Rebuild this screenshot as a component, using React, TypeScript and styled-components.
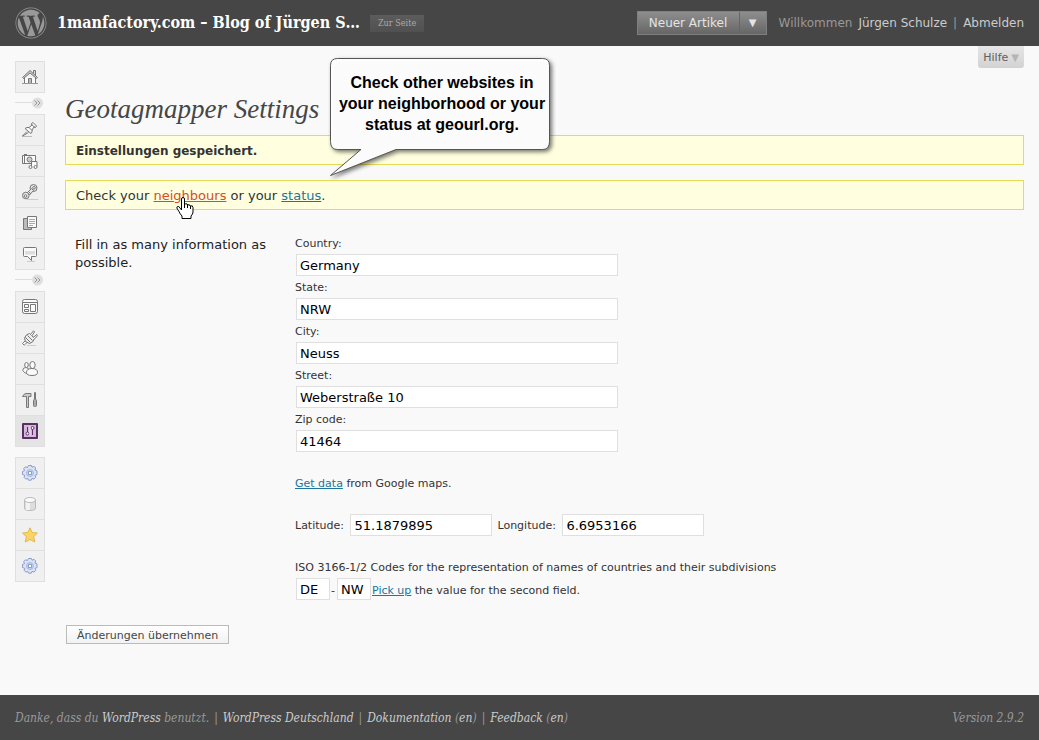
import React from "react";
import styled, { createGlobalStyle } from "styled-components";
import { FaWordpress } from "react-icons/fa";

const sans = `"DejaVu Sans", Verdana, sans-serif`;
const serif = `"DejaVu Serif Condensed", "DejaVu Serif", Georgia, serif`;

const GlobalStyle = createGlobalStyle`
  * { box-sizing: border-box; }
  body {
    margin: 0;
    background: #f9f9f9;
    color: #333;
    font: 13px/18px ${sans};
  }
`;

const Page = styled.div`
  display: flex;
  flex-direction: column;
  min-height: 100vh;
`;

const Header = styled.header`
  display: flex;
  align-items: center;
  height: 46px;
  padding: 0 15px;
  background: #464646;
  white-space: nowrap;
`;

const Logo = styled(FaWordpress)`
  width: 32px;
  height: 32px;
  color: #999;
`;

const SiteTitle = styled.h1`
  margin: 0 10px;
  color: #fff;
  font: bold 16px/24px ${serif};
`;

const VisitLink = styled.a`
  padding: 0 8px;
  background: linear-gradient(#5c5c5c, #505050);
  color: #aaa;
  font: 9px/17px ${serif};
  text-decoration: none;
`;

const HeaderRight = styled.div`
  display: flex;
  align-items: center;
  gap: 12px;
  margin-left: auto;
`;

const SplitButton = styled.div`
  display: flex;
  height: 24px;
  border: 1px solid #808080;
  background: linear-gradient(#8e8e8e, #666);
`;

const SplitPart = styled.button<{ $caret?: boolean }>`
  width: ${(p) => (p.$caret ? "27px" : "101px")};
  padding: 0;
  border: 0;
  border-left: ${(p) => (p.$caret ? "1px solid #666" : "0")};
  background: none;
  color: #e4e4e4;
  font: ${(p) => (p.$caret ? "10px" : "12px")} / 20px ${sans};
`;

const Greeting = styled.span`
  display: flex;
  gap: 6px;
  color: #999;
  font-size: 12px;
  a {
    color: #ccc;
    text-decoration: none;
  }
`;

const Body = styled.div`
  display: flex;
  flex: 1;
  gap: 20px;
  padding: 0 15px;
`;

const Sidebar = styled.nav`
  display: flex;
  flex-direction: column;
  width: 30px;
  padding-top: 15px;
`;

const MenuGroup = styled.div<{ $gap?: boolean }>`
  display: flex;
  flex-direction: column;
  margin-top: ${(p) => (p.$gap ? "10px" : "0")};
  border: 1px solid #e0e0e0;
  background: #f0f0f0;
`;

const MenuItem = styled.a<{ $active?: boolean }>`
  display: flex;
  align-items: center;
  justify-content: center;
  height: 30px;
  background: ${(p) => (p.$active ? "#e4e4e4" : "transparent")};
  & + & {
    height: 31px;
    border-top: 1px solid #e0e0e0;
  }
`;

const Separator = styled.button`
  display: flex;
  align-items: flex-start;
  height: 21px;
  padding: 4px 0 0;
  border: 0;
  background: none;
`;

const Main = styled.main`
  flex: 1;
  min-width: 0;
`;

const HelpRow = styled.div`
  display: flex;
  justify-content: flex-end;
  height: 46px;
`;

const HelpButton = styled.button`
  display: flex;
  gap: 3px;
  height: 22px;
  padding: 0 5px;
  border: 0;
  border-radius: 0 0 3px 3px;
  background: linear-gradient(#e6e6e6, #d2d2d2);
  color: #606060;
  font: 11px/23px ${sans};
  span {
    color: #b5b5b5;
    font-size: 10px;
  }
`;

const PageTitle = styled.h2`
  margin: 0 0 8px;
  color: #464646;
  font: italic 27px/35px "Liberation Serif", Georgia, serif;
`;

const Notice = styled.div`
  position: relative;
  height: 30px;
  margin-bottom: 15px;
  padding: 0 10px;
  border: 1px solid #e6db55;
  background: #ffffe0;
  line-height: 29px;
  strong {
    font-size: 12px;
  }
`;

const Link = styled.a<{ $hot?: boolean }>`
  color: ${(p) => (p.$hot ? "#d54e21" : "#21759b")};
`;

const Callout = styled.aside`
  position: absolute;
  top: -81px;
  left: 262px;
  width: 228px;
  height: 128px;
  color: #000;
  font: bold 16px/21px "Liberation Sans", Arial, sans-serif;
  text-align: center;
  svg {
    position: absolute;
    inset: 0;
  }
  p {
    position: relative;
    width: 225px;
    margin: 0;
    padding: 17px 0 0 3px;
    white-space: nowrap;
  }
`;

const Cursor = styled.svg`
  position: absolute;
  top: 16px;
  left: 110px;
`;

const FormArea = styled.form`
  display: grid;
  grid-template-columns: 200px 1fr;
  column-gap: 20px;
  padding: 7px 0 0 10px;
`;

const Intro = styled.p`
  margin: 4px 0 0;
  color: #222;
`;

const Fields = styled.div`
  font-size: 11px;
  line-height: 22px;
`;

const Field = styled.label`
  display: flex;
  flex-direction: column;
  max-width: 323px;
  span {
    height: 22px;
    line-height: 24px;
  }
`;

const TextInput = styled.input<{ $width?: number }>`
  width: ${(p) => (p.$width ? p.$width + "px" : "auto")};
  height: 22px;
  margin-left: 1px;
  padding: 0 3px;
  border: 1px solid #dfdfdf;
  border-radius: 0;
  background: #fff;
  color: #000;
  font: 13px/20px ${sans};
`;

const Line = styled.div<{ $tight?: boolean }>`
  display: flex;
  gap: ${(p) => (p.$tight ? "1px" : "5px")};
  height: 22px;
  margin-top: ${(p) => (p.$tight ? "0" : "20px")};
  line-height: ${(p) => (p.$tight ? "26px" : "24px")};
  white-space: pre;
  label {
    display: flex;
    gap: 2px;
  }
`;

const SubmitButton = styled.button`
  height: 19px;
  margin: 25px 0 51px 1px;
  padding: 1px 10px 0;
  border: 1px solid #bbb;
  background: linear-gradient(#fff, #f2f2f2);
  color: #464646;
  font: 11px/17px ${sans};
`;

const Footer = styled.footer`
  display: flex;
  justify-content: space-between;
  align-items: center;
  height: 45px;
  padding: 0 15px;
  background: #464646;
  color: #999;
  font: italic 12px/20px ${serif};
  white-space: nowrap;
  a {
    color: #ccc;
    text-decoration: none;
  }
`;

const FooterLinks = styled.span`
  display: flex;
  gap: 5px;
`;

const Glyph = ({ children, stroke = "#777" }: { children: React.ReactNode; stroke?: string }) => (
  <svg width="16" height="16" viewBox="0 0 16 16" fill="#fafafa" stroke={stroke} strokeWidth="1" strokeLinejoin="round" aria-hidden="true">
    {children}
  </svg>
);

const HomeIcon = () => (
  <Glyph>
    <path d="M2.500 8v6.500h11V8" />
    <path d="M11.500 4.500v-3h2v5" fill="#ddd" />
    <path d="M.5 8.500 8 1.500l7.500 7-1 1L8 4 1.500 9.500z" fill="#ccc" />
    <path d="M6.500 14.500v-5h3v5" fill="#bbb" />
    <path d="M0 14.500h16" stroke="#999" />
  </Glyph>
);

const PinIcon = () => (
  <Glyph>
    <path d="M0 14.500h10" stroke="#bbb" />
    <path d="M5 9.500.5 14l6-3.500" />
    <path d="M9.500 1.500 11 .5l3.500 3.500-1 1.500-1.500-.5-2 3q.5 2-1 3.500L3 6.500Q5 5 7 5.500l3-2.500z" />
    <path d="M9.500 2.500 13 5.500M7 5.500l3 3" />
  </Glyph>
);

const MediaIcon = () => (
  <Glyph>
    <path d="M.5 2.500h13v8H.5zM2 1.500h3" />
    <circle cx="7.500" cy="6.500" r="2.500" fill="#ccc" />
    <path d="M2.500 3v7" />
    <path d="M9.500 13.500V8.500h5.500v5" />
    <circle cx="8.500" cy="14" r="1.500" />
    <circle cx="13.500" cy="14" r="1.500" />
  </Glyph>
);

const LinkIcon = () => (
  <Glyph>
    <path d="M5 15.500h11" stroke="#ccc" />
    <g fill="#e6e6e6">
      <circle cx="11.500" cy="4" r="3.500" />
      <circle cx="3.800" cy="11.500" r="3.300" />
      <path d="m5.500 8.500 4-4 2 2-4 4.500z" />
      <path d="m6.500 7.500 2.500 2.500" />
    </g>
    <circle cx="12" cy="3.800" r="1.300" />
    <circle cx="3.500" cy="12" r="1.300" />
  </Glyph>
);

const PagesIcon = () => (
  <Glyph>
    <path d="M1.500 3.500h8v11h-8z" fill="#bbb" />
    <path d="M5.500 1.500h9v11h-9z" />
    <path d="M7 4.500h6M7 6.500h6M7 8.500h6M7 10.500h4" stroke="#aaa" />
  </Glyph>
);

const CommentIcon = () => (
  <Glyph>
    <path d="M5 15.500h8" stroke="#ccc" />
    <path d="M2.500 1.500h11q1 0 1 1v7q0 1-1 1H9.500v4l-4-4h-3q-1 0-1-1v-7q0-1 1-1z" />
    <path d="M3 5h10v3.500H3z" fill="#ddd" stroke="none" />
  </Glyph>
);

const LayoutIcon = () => (
  <Glyph>
    <rect x=".5" y=".5" width="15" height="14" rx="2" />
    <path d="M1 3.500h14" />
    <path d="M2.500 5.500h4v3h-4zM2.500 10.500h4v2h-4zM8.500 5.500h5v7h-5z" />
  </Glyph>
);

const PlugIcon = () => (
  <Glyph>
    <path d="M5 15.500h9" stroke="#ccc" />
    <path d="M3.500 10.500.5 13.500l1.700 1.700 3.300-3.200" />
    <path d="M3.500 11.500 2.500 8Q4 4 7.500 3.500L12.500 8.500q-1 4-5 5z" fill="#eee" />
    <path d="M8.500 4.500 11.500.8l1 1-2.500 4M11 7.500l4-3 .7 1-3.700 4" />
    <path d="m5.500 5.500 5 5M3.500 7.500l5 5" />
  </Glyph>
);

const UsersIcon = () => (
  <Glyph>
    <path d="M.8 9.500q0-3 3-3t3 3-2 3-4-3z" />
    <ellipse cx="4.500" cy="4" rx="1.800" ry="2.500" />
    <ellipse cx="10.500" cy="4" rx="2.700" ry="3.500" />
    <path d="M4.500 11.500q0-4 5.500-4t5.500 4q0 3-5.500 3t-5.500-3z" />
  </Glyph>
);

const ToolsIcon = () => (
  <Glyph>
    <path d="M.5 4.500Q2 1.500 4 1.500h5v3H6.500v11h-2v-11H2.500z" fill="#ccc" />
    <path d="M12.500 7V.500h1V7" />
    <rect x="11.500" y="7.500" width="3" height="7" rx="1" fill="#aaa" />
  </Glyph>
);

const SettingsIcon = () => (
  <Glyph stroke="#5b2f63">
    <rect x="1" y="1" width="14" height="14" fill="#d5b9db" strokeWidth="2" />
    <path d="M5.500 4v6M10.500 6v6" />
    <circle cx="5.500" cy="10.500" r="1.500" fill="#fff" />
    <circle cx="10.500" cy="5" r="1.500" fill="#fff" />
    <path d="M8 3.500v9" stroke="#f3e6f5" />
  </Glyph>
);

const GearIcon = () => (
  <Glyph stroke="#8b9dc9">
    <path d="M6.500.5h3L10 2.300l2-1 1.700 1.700-.8 2 2.100.9v3.700l-2 .8.700 2-1.700 1.700-2-.7-.8 1.800H6.500l-.7-1.800-2 .7-1.700-1.700.8-2L.5 9.500v-3l2-.9-.8-2 1.700-1.800 2.100.7z" fill="#dbe4f6" />
    <circle cx="8" cy="8" r="3.500" fill="#c5d1ed" stroke="#aab9dd" />
    <rect x="6.500" y="6.500" width="3" height="3" fill="#fff" />
  </Glyph>
);

const DatabaseIcon = () => (
  <Glyph stroke="#bbb">
    <path d="M2.500 4v8q0 2.500 5.500 2.500t5.500-2.500V4" fill="#ddd" />
    <path d="M4 6h4v8H4z" fill="#f2f2f2" stroke="none" />
    <ellipse cx="8" cy="4" rx="5.500" ry="2.500" />
  </Glyph>
);

const StarIcon = () => (
  <Glyph stroke="#e3b84c">
    <path d="m8 .8 2.200 4.700 5.200.6-3.800 3.600 1.200 5.300L8 12.500 3.200 15l1.200-5.300L.6 6.100l5.200-.6z" fill="#fbd366" />
  </Glyph>
);

const Divider = ({ label }: { label: string }) => (
  <Separator type="button" aria-label={label}>
    <svg width="28" height="12" viewBox="0 0 28 12" fill="none">
      <path d="M0 5.500h17" stroke="#dfdfdf" />
      <circle cx="22.500" cy="6" r="5.500" fill="#dfdfdf" />
      <path d="m19.500 3.500 2.500 2.500-2.500 2.500M22.500 3.500 25 6l-2.500 2.500" stroke="#999" />
    </svg>
  </Separator>
);

const Menu = ({ items, gap }: { items: [string, React.ComponentType][]; gap?: boolean }) => (
  <MenuGroup $gap={gap}>
    {items.map(([label, Icon], i) => (
      <MenuItem key={i} href="#" aria-label={label} $active={label === "Einstellungen"}>
        <Icon />
      </MenuItem>
    ))}
  </MenuGroup>
);

const addressFields = [
  ["Country:", "Germany"],
  ["State:", "NRW"],
  ["City:", "Neuss"],
  ["Street:", "Weberstraße 10"],
  ["Zip code:", "41464"],
];

export default function App() {
  return (
    <Page>
      <GlobalStyle />
      <Header>
        <Logo />
        <SiteTitle>1manfactory.com – Blog of Jürgen S…</SiteTitle>
        <VisitLink href="#">Zur Seite</VisitLink>
        <HeaderRight>
          <SplitButton>
            <SplitPart type="button">Neuer Artikel</SplitPart>
            <SplitPart type="button" $caret>▼</SplitPart>
          </SplitButton>
          <Greeting>
            <span>Willkommen</span>
            <a href="#">Jürgen Schulze</a>
            <span>|</span>
            <a href="#">Abmelden</a>
          </Greeting>
        </HeaderRight>
      </Header>
      <Body>
        <Sidebar>
          <Menu items={[["Dashboard", HomeIcon]]} />
          <Divider label="Menü einklappen" />
          <Menu
            items={[
              ["Artikel", PinIcon],
              ["Mediathek", MediaIcon],
              ["Links", LinkIcon],
              ["Seiten", PagesIcon],
              ["Kommentare", CommentIcon],
            ]}
          />
          <Divider label="Menü einklappen" />
          <Menu
            items={[
              ["Design", LayoutIcon],
              ["Plugins", PlugIcon],
              ["Benutzer", UsersIcon],
              ["Werkzeuge", ToolsIcon],
              ["Einstellungen", SettingsIcon],
            ]}
          />
          <Menu
            gap
            items={[
              ["Plugin", GearIcon],
              ["Datenbank", DatabaseIcon],
              ["Favoriten", StarIcon],
              ["Plugin", GearIcon],
            ]}
          />
        </Sidebar>
        <Main>
          <HelpRow>
            <HelpButton type="button">
              Hilfe <span>▼</span>
            </HelpButton>
          </HelpRow>
          <PageTitle>Geotagmapper Settings</PageTitle>
          <Notice>
            <strong>Einstellungen gespeichert.</strong>
            <Callout>
              <svg width="228" height="128" viewBox="0 0 228 128">
                <path
                  d="M9.500 3.500h205q7 0 7 7v76q0 8-7 8H68L2.500 120.500 33 94.500H9.500q-7 0-7-8v-76q0-7 7-7z"
                  fill="#fff"
                  fillOpacity=".97"
                  stroke="#555"
                  style={{ filter: "drop-shadow(2px 2px 2px rgba(0,0,0,.55))" }}
                />
              </svg>
              <p>
                Check other websites in
                <br />
                your neighborhood or your
                <br />
                status at geourl.org.
              </p>
            </Callout>
          </Notice>
          <Notice>
            Check your <Link href="#" $hot>neighbours</Link> or your <Link href="#">status</Link>.
            <Cursor width="18" height="23" viewBox="0 0 18 23" aria-hidden="true">
              <path
                d="M5.500 13V2q0-1.500 1.500-1.500T8.500 2v5q3-1 3 1 2.500-1 2.500 1 3-1 3 1.500V15q0 2-2 4v2.500h-9V19q-2-2-3-4.500L.8 11q0-2 2-1.500z"
                fill="#fff"
                stroke="#000"
              />
              <path d="M8.500 6v5M11.500 7v4M14.500 9v3" stroke="#000" />
            </Cursor>
          </Notice>
          <FormArea id="geo-settings" onSubmit={(e) => e.preventDefault()}>
            <Intro>Fill in as many information as possible.</Intro>
            <Fields>
              {addressFields.map(([label, value]) => (
                <Field key={label}>
                  <span>{label}</span>
                  <TextInput defaultValue={value} />
                </Field>
              ))}
              <Line>
                <span>
                  <Link href="#">Get data</Link> from Google maps.
                </span>
              </Line>
              <Line>
                <label>
                  Latitude: <TextInput $width={142} defaultValue="51.1879895" />
                </label>
                <label>
                  Longitude: <TextInput $width={142} defaultValue="6.6953166" />
                </label>
              </Line>
              <Line>ISO 3166-1/2 Codes for the representation of names of countries and their subdivisions</Line>
              <Line $tight>
                <TextInput $width={34} aria-label="Country code" defaultValue="DE" />
                <span>-</span>
                <TextInput $width={34} aria-label="Subdivision code" defaultValue="NW" />
                <span>
                  <Link href="#">Pick up</Link> the value for the second field.
                </span>
              </Line>
            </Fields>
          </FormArea>
          <SubmitButton type="submit" form="geo-settings">Änderungen übernehmen</SubmitButton>
        </Main>
      </Body>
      <Footer>
        <FooterLinks>
          <span>
            Danke, dass du <a href="#">WordPress</a> benutzt.
          </span>
          <span>|</span>
          <a href="#">WordPress Deutschland</a>
          <span>|</span>
          <span>
            <a href="#">Dokumentation</a> (<a href="#">en</a>)
          </span>
          <span>|</span>
          <span>
            <a href="#">Feedback</a> (<a href="#">en</a>)
          </span>
        </FooterLinks>
        <span>Version 2.9.2</span>
      </Footer>
    </Page>
  );
}
